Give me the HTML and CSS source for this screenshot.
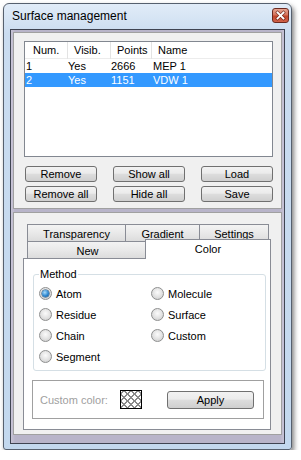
FILE: index.html
```html
<!DOCTYPE html>
<html>
<head>
<meta charset="utf-8">
<link rel="stylesheet" href="styles.css">
</head>
<body>
<div class="window">
  <div class="titlebar">
    <span class="title">Surface management</span>
    <span class="close">
      <svg width="17" height="15" viewBox="0 0 17 15">
        <path d="M5.5 4.5 L11.5 10.5 M11.5 4.5 L5.5 10.5" stroke="#5a1a10" stroke-width="3.2" stroke-linecap="square" fill="none" opacity="0.7"/>
        <path d="M5.5 4.5 L11.5 10.5 M11.5 4.5 L5.5 10.5" stroke="#ffffff" stroke-width="1.8" stroke-linecap="square" fill="none"/>
      </svg>
    </span>
  </div>
  <div class="client">
    <div class="panel top">
      <div class="list">
        <div class="lhead">
          <span class="h1">Num.</span><span>Visib.</span><span>Points</span><span class="hlast">Name</span>
        </div>
        <div class="lrow">
          <span class="d1">1</span><span>Yes</span><span>2666</span><span class="d4">MEP 1</span>
        </div>
        <div class="lrow sel">
          <span class="d1">2</span><span>Yes</span><span>1151</span><span class="d4">VDW 1</span>
        </div>
      </div>
      <div class="buttons">
        <span class="btn">Remove</span>
        <span class="btn">Show all</span>
        <span class="btn">Load</span>
        <span class="btn">Remove all</span>
        <span class="btn">Hide all</span>
        <span class="btn">Save</span>
      </div>
    </div>
    <div class="panel bottom">
      <div class="tabrow">
        <span class="tab t-transp">Transparency</span>
        <span class="tab t-grad">Gradient</span>
        <span class="tab t-set">Settings</span>
      </div>
      <div class="tabrow">
        <span class="tab t-new">New</span>
        <span class="tab t-color sel">Color</span>
      </div>
      <div class="pane">
        <fieldset class="method">
          <legend>Method</legend>
          <div class="radios">
            <span class="opt"><span class="radio on"></span>Atom</span>
            <span class="opt"><span class="radio"></span>Molecule</span>
            <span class="opt"><span class="radio"></span>Residue</span>
            <span class="opt"><span class="radio"></span>Surface</span>
            <span class="opt"><span class="radio"></span>Chain</span>
            <span class="opt"><span class="radio"></span>Custom</span>
            <span class="opt"><span class="radio"></span>Segment</span>
          </div>
        </fieldset>
        <div class="custom">
          <span class="clabel">Custom color:</span>
          <span class="swatch"></span>
          <span class="btn apply">Apply</span>
        </div>
      </div>
    </div>
  </div>
</div>
</body>
</html>
```

FILE: styles.css
```css
html, body {
  margin: 0;
  background: #ffffff;
}
body {
  padding: 3px 0 0 3px;
  font-family: "Liberation Sans", Arial, sans-serif;
  font-size: 11px;
  color: #000;
}
.window {
  box-sizing: border-box;
  width: 289px;
  height: 447px;
  border: 1px solid #56606e;
  border-radius: 6px 6px 3px 3px;
  background: linear-gradient(#e1ecf8, #cadcf0 30px, #c3d8ee);
  box-shadow: 2px 3px 5px rgba(0, 0, 0, 0.5);
  padding: 0 6px 5px 6px;
  display: flex;
  flex-direction: column;
}
.titlebar {
  height: 25px;
  display: flex;
  align-items: flex-start;
  flex: none;
}
.title {
  margin: 5px 0 0 2px;
  font-size: 12px;
  line-height: 15px;
  color: #000;
}
.close {
  margin: 4px -4px 0 auto;
  width: 17px;
  height: 15px;
  box-sizing: border-box;
  border: 1px solid #6b2a20;
  border-radius: 3px;
  background: linear-gradient(#e8a593, #d4735c 45%, #c2452b 55%, #d0634a);
  display: flex;
}
.close svg {
  margin: -1px;
}
.client {
  flex: 1;
  border: 1px solid #3f4452;
  background: linear-gradient(90deg, #c8c4d6, #b8b4c9 4px, #b8b4c9 calc(100% - 4px), #c8c4d6);
  padding: 2px 2px 8px 2px;
  display: flex;
  flex-direction: column;
  gap: 3px;
}
.panel {
  box-sizing: border-box;
  border: 1px solid #a0a0a0;
  background: #f0f0f0;
}
.top {
  height: 177px;
  flex: none;
  padding: 8px 8px 0 10px;
}
.list {
  box-sizing: border-box;
  height: 116px;
  border: 1px solid #828790;
  background: #fff;
}
.lhead, .lrow {
  display: grid;
  grid-template-columns: 43px 43px 41px 1fr;
}
.lhead {
  height: 17px;
  box-sizing: border-box;
  border-bottom: 1px solid #ececec;
}
.lhead span {
  border-right: 1px solid #e3e3e3;
  line-height: 17px;
  padding-left: 6px;
  white-space: nowrap;
}
.lhead .h1 {
  padding-left: 8px;
}
.lhead .hlast {
  border-right: 0;
}
.lrow {
  height: 14px;
  line-height: 14px;
}
.lrow span {
  white-space: nowrap;
}
.lrow .d1 {
  padding-left: 1px;
}
.lrow .d4 {
  padding-left: 1px;
}
.lrow.sel {
  background: #3399ff;
  color: #fff;
}
.buttons {
  display: grid;
  grid-template-columns: repeat(3, 72px);
  justify-content: space-between;
  row-gap: 4px;
  margin: 9px 0 0 1px;
}
.btn {
  box-sizing: border-box;
  height: 16px;
  border: 1px solid #707070;
  border-radius: 3px;
  background: linear-gradient(#f2f2f2, #ebebeb 45%, #dddddd 50%, #cfcfcf);
  text-align: center;
  line-height: 14px;
  white-space: nowrap;
}
.bottom {
  flex: 1;
  padding: 11px 10px 4px 9px;
  display: flex;
  flex-direction: column;
}
.tabrow {
  display: flex;
  height: 17px;
  margin: 0 2px 0 4px;
  flex: none;
  align-items: flex-start;
}
.tab {
  box-sizing: border-box;
  height: 17px;
  border: 1px solid #898c95;
  border-bottom: 0;
  background: linear-gradient(#f3f3f3, #e9e9e9 50%, #dcdcdc);
  text-align: center;
  line-height: 18px;
  margin-left: -1px;
  flex: none;
}
.tab:first-child {
  margin-left: 0;
}
.t-transp { width: 99px; }
.t-grad { width: 75px; }
.t-set { width: 70px; }
.t-new { width: 121px; }
.tab.sel {
  position: relative;
  z-index: 1;
  width: 126px;
  height: 20px;
  margin-top: -2px;
  margin-left: -3px;
  background: #ffffff;
  line-height: 19px;
}
.pane {
  flex: 1;
  border: 1px solid #898c95;
  background: #fff;
  display: flex;
  flex-direction: column;
}
.method {
  margin: 9px 4px 0 9px;
  border: 1px solid #d5dfe5;
  border-radius: 3px;
  padding: 2px 0 3px 5px;
  min-width: 0;
}
.method legend {
  padding: 0 1px;
  margin-left: 0;
  line-height: 13px;
}
.radios {
  display: grid;
  grid-template-columns: 112px 1fr;
  grid-auto-rows: 21px;
}
.opt {
  display: flex;
  align-items: center;
  white-space: nowrap;
}
.radio {
  box-sizing: border-box;
  width: 13px;
  height: 13px;
  border: 1px solid #8e8f8f;
  border-radius: 50%;
  background: radial-gradient(circle at 50% 40%, #fbfbfb, #e6e6e6 45%, #c9c9c9);
  margin-right: 4px;
  display: flex;
  align-items: center;
  justify-content: center;
  flex: none;
}
.radio.on::after {
  content: "";
  width: 7px;
  height: 7px;
  border-radius: 50%;
  background: radial-gradient(circle at 40% 35%, #a9dcfb, #2d86cf 55%, #0f4f8c);
  box-shadow: 0 0 0 0.5px #14446e;
}
.custom {
  box-sizing: border-box;
  margin: 9px 6px 0 8px;
  height: 39px;
  border: 1px solid #a0a0a0;
  display: flex;
  align-items: center;
  padding-left: 7px;
}
.clabel {
  width: 80px;
  color: #a0a0a0;
  white-space: nowrap;
  flex: none;
}
.swatch {
  box-sizing: border-box;
  width: 22px;
  height: 19px;
  border: 1px solid #000;
  background-color: #fff;
  background-image:
    repeating-linear-gradient(45deg, transparent 0 4px, #8a8a8a 4px 5px),
    repeating-linear-gradient(-45deg, transparent 0 4px, #8a8a8a 4px 5px);
  flex: none;
}
.apply {
  width: 87px;
  height: 18px;
  line-height: 16px;
  margin-left: 25px;
  flex: none;
}
```
